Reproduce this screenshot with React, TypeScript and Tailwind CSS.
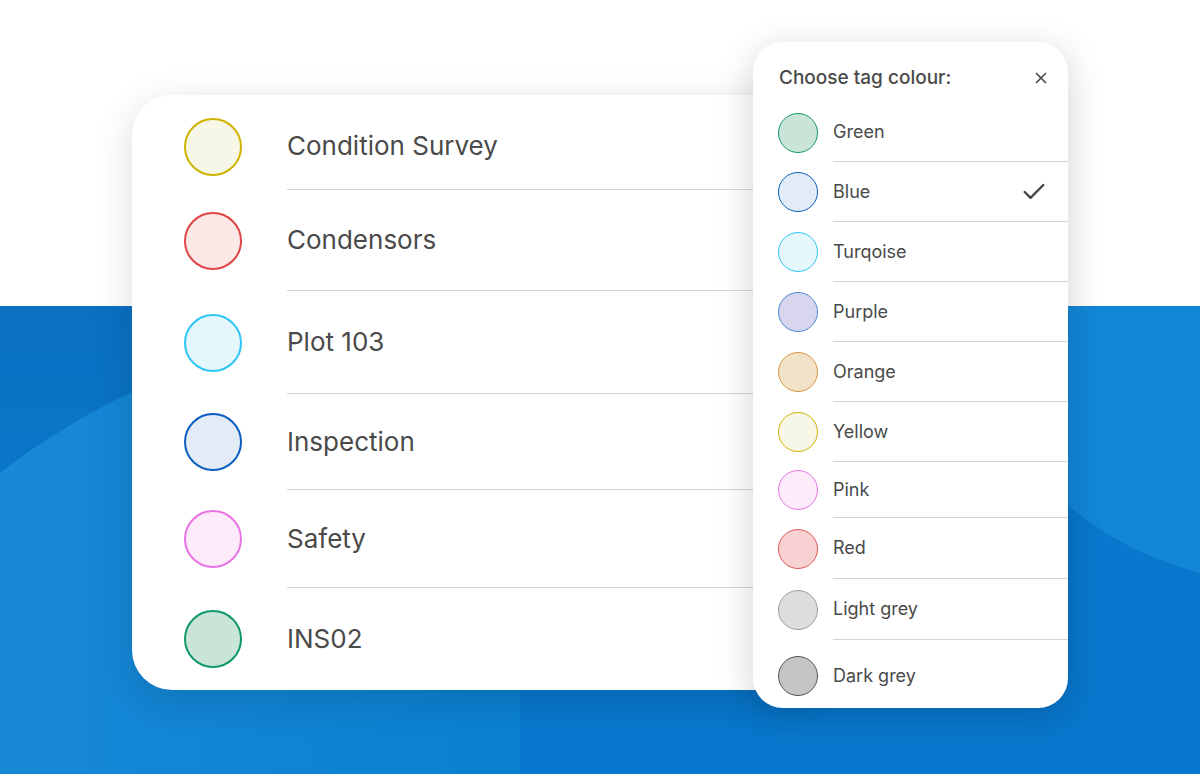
import { X, Check } from "lucide-react";

const tags = [
  { label: "Condition Survey", border: "border-[#cfb300]", fill: "bg-[#f7f7e7]", h: "h-[95px] pt-[8px]" },
  { label: "Condensors", border: "border-[#e04545]", fill: "bg-[#fde8e8]", h: "h-[101px]" },
  { label: "Plot 103", border: "border-[#2ec7f5]", fill: "bg-[#e5f6fd]", h: "h-[103px]" },
  { label: "Inspection", border: "border-[#0a5fbf]", fill: "bg-[#e3ebf6]", h: "h-[96px]" },
  { label: "Safety", border: "border-[#e774e2]", fill: "bg-[#fdebfb]", h: "h-[98px]" },
  { label: "INS02", border: "border-[#11986a]", fill: "bg-[#cae5d8]", h: "h-[102px]" },
];

const colours = [
  { label: "Green", border: "border-[#11986a]", fill: "bg-[#cae5d8]", h: "h-[59px]" },
  { label: "Blue", border: "border-[#0a5fbf]", fill: "bg-[#e3ebf6]", h: "h-[60px]", checked: true },
  { label: "Turqoise", border: "border-[#2ec7f5]", fill: "bg-[#e5f6fd]", h: "h-[60px]" },
  { label: "Purple", border: "border-[#4a8ad8]", fill: "bg-[#d8d5ee]", h: "h-[60px]" },
  { label: "Orange", border: "border-[#d4993a]", fill: "bg-[#f3e2ca]", h: "h-[60px]" },
  { label: "Yellow", border: "border-[#cfb300]", fill: "bg-[#f7f7e7]", h: "h-[60px]" },
  { label: "Pink", border: "border-[#e774e2]", fill: "bg-[#fdebfb]", h: "h-[56px]" },
  { label: "Red", border: "border-[#e05555]", fill: "bg-[#f8d2d2]", h: "h-[61px]" },
  { label: "Light grey", border: "border-[#9c9c9c]", fill: "bg-[#dddddd]", h: "h-[61px]" },
  { label: "Dark grey", border: "border-[#555555]", fill: "bg-[#c4c4c4]", h: "h-[68px] pt-[4px]" },
];

function Background() {
  return (
    <svg className="block h-[468px] w-full" viewBox="0 0 1200 468" preserveAspectRatio="none">
      <defs>
        <linearGradient id="leftGrad" x1="0" y1="0" x2="0" y2="1">
          <stop offset="0" stopColor="#0a70c2" />
          <stop offset="1" stopColor="#0a80d0" />
        </linearGradient>
        <linearGradient id="rightGrad" x1="0" y1="0" x2="0" y2="1">
          <stop offset="0" stopColor="#0868b8" />
          <stop offset="0.25" stopColor="#0877cc" />
          <stop offset="1" stopColor="#0877cd" />
        </linearGradient>
        <linearGradient id="swoop" x1="0" y1="0" x2="1" y2="0">
          <stop offset="0" stopColor="#1789d7" />
          <stop offset="0.3" stopColor="#1386d5" />
          <stop offset="1" stopColor="#0a80d0" />
        </linearGradient>
      </defs>
      <rect x="0" y="0" width="1200" height="468" fill="url(#rightGrad)" />
      <rect x="0" y="0" width="520" height="468" fill="url(#leftGrad)" />
      <path d="M0,167 C50,128 95,104 132,86 C250,30 400,10 520,4 L520,468 L0,468 Z" fill="url(#swoop)" />
      <path d="M1068,0 L1200,0 L1200,267 Q1120,245 1068,199 Z" fill="#1287d7" />
    </svg>
  );
}

export default function App() {
  return (
    <div className="relative h-[774px] w-[1200px] overflow-hidden bg-white font-['Inter',sans-serif] text-[#4a4a4a]">
      <div className="h-[306px] bg-white" />
      <Background />

      <div className="absolute left-[132px] top-[95px] w-[680px] overflow-hidden rounded-[40px] bg-white shadow-[0_10px_40px_rgba(0,0,0,0.14)]">
        {tags.map((t, i) => (
          <div key={t.label} className={`flex items-center ${t.h}`}>
            <div className="flex w-[155px] shrink-0 justify-center pl-[7px]">
              <div className={`h-[58px] w-[58px] rounded-full border-2 ${t.border} ${t.fill}`} />
            </div>
            <div
              className={`flex h-full flex-1 items-center ${
                i < tags.length - 1 ? "border-b border-[#d4d4d4]" : ""
              }`}
            >
              <span className="text-[26px] leading-none">{t.label}</span>
            </div>
          </div>
        ))}
      </div>

      <div className="absolute left-[753px] top-[42px] w-[315px] overflow-hidden rounded-[30px] bg-white shadow-[0_8px_36px_rgba(0,0,0,0.18)]">
        <div className="flex h-[61px] items-end justify-between pb-[16px] pl-[26px] pr-[18px]">
          <span className="text-[19px] font-medium leading-none text-[#4a4a4a]">Choose tag colour:</span>
          <X size={18} strokeWidth={2.2} className="text-[#4a4a4a]" />
        </div>
        {colours.map((c, i) => (
          <div key={c.label} className={`flex items-center ${c.h}`}>
            <div className="flex w-[80px] shrink-0 items-center pl-[25px]">
              <div className={`h-[40px] w-[40px] rounded-full border-[1.5px] ${c.border} ${c.fill}`} />
            </div>
            <div
              className={`flex h-full flex-1 items-center justify-between pr-[20px] ${
                i < colours.length - 1 ? "border-b border-[#d4d4d4]" : ""
              }`}
            >
              <span className="text-[18px] leading-none">{c.label}</span>
              {c.checked && <Check size={28} strokeWidth={2} className="text-[#444]" />}
            </div>
          </div>
        ))}
      </div>
    </div>
  );
}
